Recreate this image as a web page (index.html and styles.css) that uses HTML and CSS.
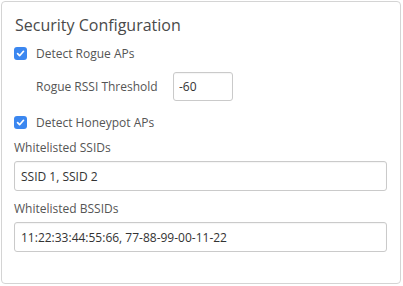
FILE: index.html
```html
<!DOCTYPE html>
<html lang="en">
<head>
	<meta charset="UTF-8">
	<title>Security Configuration</title>
	<link rel="stylesheet" href="styles.css">
</head>
<body>
	<div class="panel">
		<h3 class="panelTitle">Security Configuration</h3>
		<label class="checkRow rowRogue">
			<span class="checkBox"><svg width="9" height="9" viewBox="0 0 9 9"><path d="M1.6 4.7 L3.6 6.7 L7.5 2.3" fill="none" stroke="#fff" stroke-width="1.7" stroke-linecap="round" stroke-linejoin="round"/></svg></span>
			Detect Rogue APs
		</label>
		<div class="subRow">
			<span class="subLabel">Rogue RSSI Threshold</span>
			<input class="field fieldSmall" type="text" value="-60">
		</div>
		<label class="checkRow rowHoney">
			<span class="checkBox"><svg width="9" height="9" viewBox="0 0 9 9"><path d="M1.6 4.7 L3.6 6.7 L7.5 2.3" fill="none" stroke="#fff" stroke-width="1.7" stroke-linecap="round" stroke-linejoin="round"/></svg></span>
			Detect Honeypot APs
		</label>
		<div class="fieldLabel labelSsid">Whitelisted SSIDs</div>
		<input class="field" type="text" value="SSID 1, SSID 2">
		<div class="fieldLabel labelBssid">Whitelisted BSSIDs</div>
		<input class="field" type="text" value="11:22:33:44:55:66, 77-88-99-00-11-22">
	</div>
</body>
</html>
```

FILE: styles.css
```css
*{margin:0;padding:0;box-sizing:border-box;}
body{background:#fff;font-family:"Open Sans",sans-serif;color:#555;}
.panel{width:400px;height:283px;margin:1px 0 0 1px;border:1px solid #d4d4d4;border-radius:4px;padding:12px 13px 0 12px;display:flex;flex-direction:column;}
.panelTitle{font-size:16px;font-weight:normal;line-height:22px;color:#4a4a4a;padding-left:1px;}
.checkRow{display:flex;align-items:center;height:20px;font-size:12px;}
.rowRogue{margin-top:7px;}
.rowHoney{margin-top:11px;}
.checkBox{width:13px;height:13px;border-radius:3px;background:#3b87f0;display:flex;align-items:center;justify-content:center;margin:1px 9px 0 0;}
.subRow{display:flex;align-items:center;margin:9px 0 0 22px;font-size:12px;}
.subLabel{width:137px;}
.field{height:30px;width:100%;border:1px solid #cacaca;border-radius:3px;padding:0 6px;font-family:"Open Sans",sans-serif;font-size:12px;color:#333;outline:none;box-shadow:inset 0 1px 1px rgba(0,0,0,0.04);}
.fieldSmall{width:60px;height:29px;padding:0 5px;}
.fieldLabel{font-size:12px;line-height:18px;}
.labelSsid{margin-top:7px;}
.labelBssid{margin-top:9px;}
.fieldLabel+.field{margin-top:4px;}
```
